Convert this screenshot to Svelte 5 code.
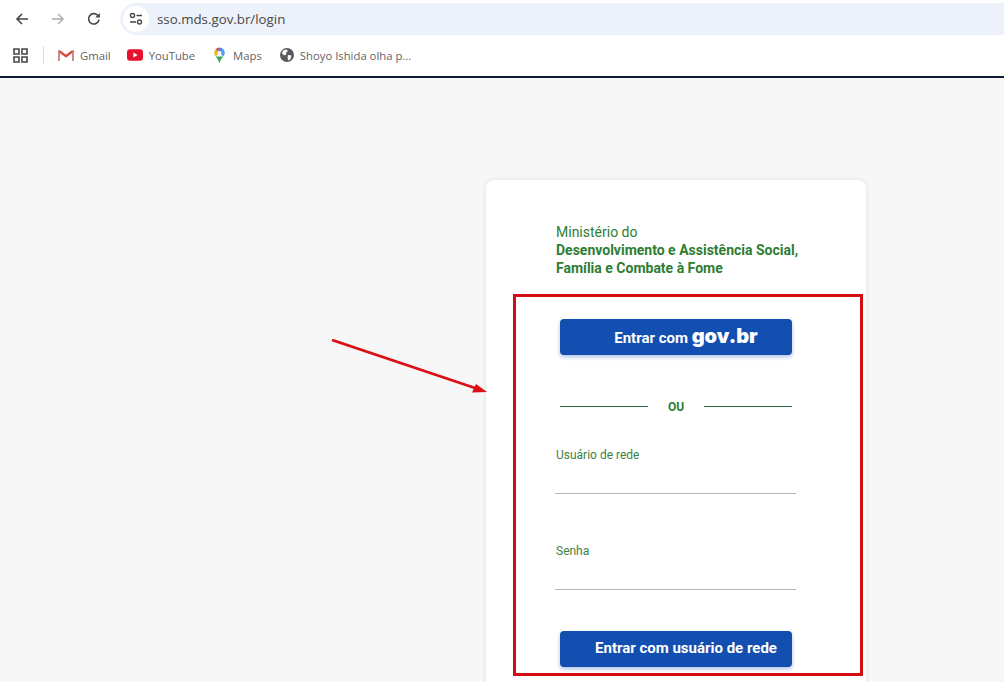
<script lang="ts">
    const bookmarks = [
        { id: 'gmail', label: 'Gmail' },
        { id: 'youtube', label: 'YouTube' },
        { id: 'maps', label: 'Maps' },
        { id: 'globe', label: 'Shoyo Ishida olha p...' },
    ]
</script>

<div class="page">
    <header class="chrome">
        <div class="toolbar">
            <button class="nav" aria-label="Voltar">
                <svg viewBox="0 0 16 16" width="16" height="16"><path d="M14 8H3M8 3 3 8l5 5" fill="none" stroke="#474747" stroke-width="1.6" /></svg>
            </button>
            <button class="nav" aria-label="Avançar">
                <svg viewBox="0 0 16 16" width="16" height="16"><path d="M2 8h11M8 3l5 5-5 5" fill="none" stroke="#a9abae" stroke-width="1.4" /></svg>
            </button>
            <button class="nav" aria-label="Recarregar">
                <svg viewBox="0 0 16 16" width="16" height="16"><path d="M13 8.6A5.2 5.2 0 1 1 11.6 4.2L13.2 5.8" fill="none" stroke="#474747" stroke-width="1.6" /><path d="M13.8 2v4.6H9.2z" fill="#474747" /></svg>
            </button>
            <div class="omnibox">
                <span class="tune">
                    <svg viewBox="0 0 16 16" width="16" height="16">
                        <circle cx="4.5" cy="4.5" r="2" fill="none" stroke="#474747" stroke-width="1.4" />
                        <path d="M8.5 4.5H14M2 11h6" stroke="#474747" stroke-width="1.4" />
                        <circle cx="11.5" cy="11" r="2" fill="none" stroke="#474747" stroke-width="1.4" />
                    </svg>
                </span>
                <span class="url">sso.mds.gov.br/login</span>
            </div>
        </div>
        <div class="bookmarks">
            <svg class="apps" viewBox="0 0 15 15" width="15" height="15">
                <path d="M1 1h5v5H1zM9 1h5v5H9zM1 9h5v5H1zM9 9h5v5H9z" fill="none" stroke="#474747" stroke-width="1.6" />
            </svg>
            <span class="sep"></span>
            {#each bookmarks as b}
                <span class="bookmark {b.id}">
                    {#if b.id === 'gmail'}
                        <svg viewBox="0 0 16 12" width="16" height="12">
                            <path d="M1 12V2.4L8 7.6l7-5.200V12" fill="none" stroke="#d08a85" stroke-width="2" />
                            <path d="M1.400 2 8 7l6.600-5" fill="none" stroke="#d8433a" stroke-width="2" />
                        </svg>
                    {:else if b.id === 'youtube'}
                        <svg viewBox="0 0 16 12" width="16" height="12">
                            <rect width="16" height="11.500" y="0.200" rx="3" fill="#e8112d" />
                            <path d="M6.400 3.400v5L10.600 5.900z" fill="#fff" />
                        </svg>
                    {:else if b.id === 'maps'}
                        <svg viewBox="0 0 12 16" width="13" height="17">
                            <path d="M2.300 2.200A5 5 0 0 1 6 .5L4 5z" fill="#e8453c" />
                            <path d="M6 .5a5 5 0 0 1 3.600 1.600L6 5.500 4 5z" fill="#4285f4" />
                            <path d="M9.600 2.100A5 5 0 0 1 11 5.500c0 1.400-.7 2.500-1.500 3.500L6 5.500z" fill="#5a9bf0" />
                            <path d="M2.300 2.200 6 5.500 2.400 8.900C1.500 7.800 1 6.800 1 5.500c0-1.300.5-2.400 1.300-3.300z" fill="#f6bb18" />
                            <path d="M2.400 8.900 9.500 9C8 10.800 6.600 12.500 6 15.500 5.400 12.800 3.900 10.800 2.400 8.900z" fill="#34a853" />
                            <circle cx="6" cy="5.500" r="1.800" fill="#fff" />
                        </svg>
                    {:else}
                        <svg viewBox="0 0 14 14" width="14" height="14">
                            <circle cx="7" cy="7" r="7" fill="#5a5a5a" />
                            <path d="M3 2.500 6.500 1.500 8 3 6 4.500 6.500 6 4.500 7.500 2 5.500zM8 7l3.500.5L10.500 11 8.500 12.500 7.500 10z" fill="#fff" />
                        </svg>
                    {/if}
                    <span>{b.label}</span>
                </span>
            {/each}
        </div>
    </header>

    <main class="content">
        <section class="card">
            <div class="brand">
                <span>Ministério do</span>
                <strong>Desenvolvimento e Assistência Social,</strong>
                <strong>Família e Combate à Fome</strong>
            </div>

            <button class="primary">Entrar com <b>gov.br</b></button>

            <div class="divider"><span>OU</span></div>

            <div class="field">
                <span class="label">Usuário de rede</span>
            </div>
            <div class="field second">
                <span class="label">Senha</span>
            </div>

            <button class="primary user">Entrar com usuário de rede</button>
        </section>

        <div class="highlight"></div>
        <svg class="arrow" viewBox="0 0 160 60" width="160" height="60">
            <path d="M2 1 148 50" stroke="#dc0f12" stroke-width="2.800" />
            <path d="M157 53 142 53.500 146 45z" fill="#dc0f12" />
        </svg>
    </main>
</div>

<style>
    :global(body) {
        margin: 0;
        background: #f7f7f8;
    }
    .page {
        height: 682px;
        overflow: hidden;
        display: flex;
        flex-direction: column;
        font-family: Roboto, "Liberation Sans", sans-serif;
    }

    .chrome {
        background: #fff;
        border-bottom: 2px solid #101c36;
    }
    .toolbar {
        height: 38px;
        display: flex;
        align-items: center;
        padding-left: 4px;
    }
    .nav {
        width: 36px;
        height: 30px;
        padding: 0;
        border: none;
        background: none;
        display: flex;
        align-items: center;
        justify-content: center;
    }
    .omnibox {
        flex: 1;
        height: 32px;
        margin-left: 8px;
        border-radius: 16px 0 0 16px;
        background: #edf2fa;
        display: flex;
        align-items: center;
        padding-left: 3px;
    }
    .tune {
        width: 26px;
        height: 26px;
        border-radius: 50%;
        background: #fff;
        display: flex;
        align-items: center;
        justify-content: center;
    }
    .url {
        margin-left: 8px;
        font-family: "Open Sans", sans-serif;
        font-size: 13.300px;
        color: #474747;
    }

    .bookmarks {
        height: 34px;
        padding: 0 0 4px 13px;
        display: flex;
        align-items: center;
        font-family: "Open Sans", sans-serif;
        font-size: 11.300px;
        color: #5f6368;
    }
    .apps {
        flex: none;
    }
    .sep {
        width: 1px;
        height: 18px;
        margin: 0 14px 0 15px;
        background: #d3dbe6;
    }
    .bookmark {
        display: flex;
        align-items: center;
        gap: 6px;
        margin-right: 18px;
    }
    .bookmark.gmail {
        margin-right: 16px;
    }
    .bookmark.maps {
        gap: 7px;
    }

    .content {
        flex: 1;
        position: relative;
        background: #f7f7f8;
    }
    .card {
        width: 380px;
        height: 560px;
        margin: 102px 0 0 486px;
        box-sizing: border-box;
        padding: 43px 70px 0;
        background: #fff;
        border-radius: 8px;
        box-shadow: 0 0 4px rgba(0, 0, 0, 0.1);
        display: flex;
        flex-direction: column;
        color: #2e7d32;
    }
    .brand {
        display: flex;
        flex-direction: column;
        font-size: 14px;
        line-height: 18px;
        white-space: nowrap;
    }
    .brand strong {
        font-weight: 700;
    }
    .primary {
        width: 232px;
        height: 36px;
        flex: none;
        margin: 42px 0 0 4px;
        padding: 0 0 2px 20px;
        border: none;
        border-radius: 4px;
        background: #134fb0;
        color: #fff;
        font-family: Roboto, sans-serif;
        font-size: 15px;
        font-weight: 700;
        box-shadow: 0 2px 4px rgba(19, 79, 176, 0.35);
    }
    .primary b {
        font-family: Inter, sans-serif;
        font-size: 20px;
        font-weight: 900;
    }
    .primary.user {
        margin-top: 41px;
    }
    .divider {
        width: 232px;
        margin: 44px 0 0 4px;
        height: 14px;
        display: flex;
        align-items: center;
        gap: 20px;
        font-size: 12px;
        font-weight: 700;
    }
    .divider span {
        padding-top: 1px;
    }
    .divider::before,
    .divider::after {
        content: "";
        flex: 1;
        height: 1px;
        background: #2f6b3a;
    }
    .field {
        width: 241px;
        height: 46px;
        margin: 35px 0 0 -1px;
        padding-left: 1px;
        box-sizing: border-box;
        border-bottom: 1px solid #b5b5b5;
    }
    .field.second {
        margin-top: 50px;
    }
    .label {
        display: block;
        font-size: 12px;
        line-height: 14px;
        color: #3f8142;
    }

    .highlight {
        position: absolute;
        left: 513px;
        top: 216px;
        width: 350px;
        height: 382px;
        box-sizing: border-box;
        border: 3px solid #d40d12;
    }
    .arrow {
        position: absolute;
        left: 330px;
        top: 261px;
    }
</style>
